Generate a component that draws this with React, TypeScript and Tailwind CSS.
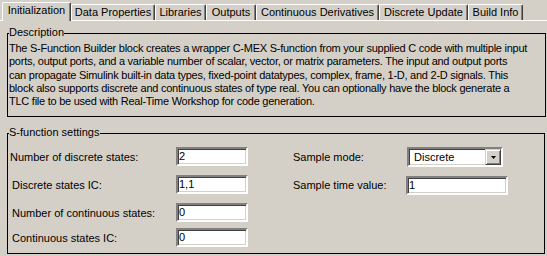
const tabs = [
  { label: "Initialization", w: "w-[69px]", active: true },
  { label: "Data Properties", w: "w-[84px]" },
  { label: "Libraries", w: "w-[51px]" },
  { label: "Outputs", w: "w-[50px]" },
  { label: "Continuous Derivatives", w: "w-[123px]" },
  { label: "Discrete Update", w: "w-[89px]" },
  { label: "Build Info", w: "w-[55px]" },
];

const description = [
  "The S-Function Builder block creates a wrapper C-MEX S-function from your supplied C code with multiple input",
  "ports, output ports, and a variable number of scalar, vector, or matrix parameters. The input and output ports",
  "can propagate Simulink built-in data types, fixed-point datatypes, complex, frame, 1-D, and 2-D signals. This",
  "block also supports discrete and continuous states of type real. You can optionally have the block generate a",
  "TLC file to be used with Real-Time Workshop for code generation.",
];

const sunken =
  "border-2 border-t-[#808080] border-l-[#808080] border-b-white border-r-white bg-white shadow-[inset_1px_1px_#404040,inset_-1px_-1px_#d4d0c8]";

function Field({ value, w = "w-[72px]" }: { value: string; w?: string }) {
  return <div className={`${sunken} ${w} h-[19px] pl-[1px] leading-[15px]`}>{value}</div>;
}

function Row({ label, value, indent, mt }: { label: string; value: string; indent: string; mt: string }) {
  return (
    <div className={`flex items-center h-[19px] ${mt} ${indent}`}>
      <span className="flex-1 pt-[2px]">{label}</span>
      <Field value={value} />
    </div>
  );
}

export default function App() {
  return (
    <div className="w-[547px] h-[256px] overflow-hidden bg-[#d4d0c8] text-[11px] leading-[13px] text-black font-['Liberation_Sans',Arial,sans-serif]">
      {/* tab strip */}
      <div className="flex items-end h-[20px] pl-[2px]">
        {tabs.map((t) =>
          t.active ? (
            <div
              key={t.label}
              className={`${t.w} relative z-10 h-[19px] mb-[-1px] pb-[3px] flex items-center justify-center bg-[#d4d0c8] border-t border-l border-white border-r border-r-[#404040] shadow-[inset_-1px_0_#808080] rounded-tl-[2px] rounded-tr-[2px]`}
            >
              {t.label}
            </div>
          ) : (
            <div
              key={t.label}
              className={`${t.w} h-[16px] flex items-center justify-center border-t border-l border-white border-r border-r-[#404040] shadow-[inset_-1px_0_#808080] rounded-tl-[2px] rounded-tr-[2px]`}
            >
              {t.label}
            </div>
          )
        )}
      </div>

      {/* pane */}
      <div className="border-t border-white pt-[12px] pl-[7px]">
        {/* Description */}
        <div className="relative w-[539px] h-[84px] border border-black pt-[8px] pl-[1px]">
          <span className="absolute left-[1px] top-[-8px] bg-[#d4d0c8]">Description</span>
          {description.map((line) => (
            <p key={line} className="whitespace-nowrap tracking-[-0.25px] leading-[13.25px]">
              {line}
            </p>
          ))}
        </div>

        {/* S-function settings */}
        <div className="relative mt-[16px] w-[538px] h-[121px] border border-black pt-[13px] flex">
          <span className="absolute left-[1px] top-[-8px] bg-[#d4d0c8]">S-function settings</span>
          <div className="w-[240px] flex flex-col">
            <Row label="Number of discrete states:" value="2" indent="pl-[2px]" mt="" />
            <Row label="Discrete states IC:" value="1,1" indent="pl-[4px]" mt="mt-[9px]" />
            <Row label="Number of continuous states:" value="0" indent="pl-[4px]" mt="mt-[9px]" />
            <Row label="Continuous states IC:" value="0" indent="pl-[4px]" mt="mt-[6px]" />
          </div>
          <div className="ml-[45px] flex flex-col">
            <div className="flex items-center h-[20px]">
              <span className="w-[114px]">Sample mode:</span>
              <div className={`${sunken} w-[96px] h-[20px] flex items-center`}>
                <span className="flex-1 pl-[5px] pt-[1px]">Discrete</span>
                <div className="w-[16px] h-[16px] bg-[#d4d0c8] border border-t-[#d4d0c8] border-l-[#d4d0c8] border-b-[#404040] border-r-[#404040] shadow-[inset_1px_1px_#ffffff,inset_-1px_-1px_#808080] flex items-center justify-center">
                  <svg width="5" height="3" viewBox="0 0 5 3">
                    <path d="M0 0h5L2.5 3z" fill="#000" />
                  </svg>
                </div>
              </div>
            </div>
            <div className="flex items-center h-[19px] mt-[9px]">
              <span className="w-[113px]">Sample time value:</span>
              <Field value="1" w="w-[102px]" />
            </div>
          </div>
        </div>
      </div>
    </div>
  );
}
